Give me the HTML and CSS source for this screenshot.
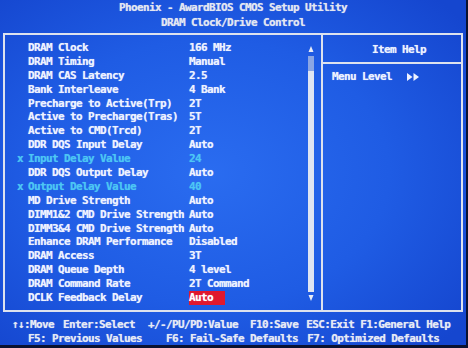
FILE: index.html
```html
<!DOCTYPE html>
<html lang="en">
<head>
    <meta charset="UTF-8">
    <title>DRAM Clock/Drive Control</title>
    <link rel="stylesheet" href="styles.css">
</head>
<body>
    <div class="screen">
        <header class="title">
            <div>Phoenix - AwardBIOS CMOS Setup Utility</div>
            <div>DRAM Clock/Drive Control</div>
        </header>

        <div class="frame">
            <section class="menu">
                <ul class="items">
                    <li class="item"><span class="mark"></span><span class="label">DRAM Clock</span><span class="value">166 MHz</span></li>
                    <li class="item"><span class="mark"></span><span class="label">DRAM Timing</span><span class="value">Manual</span></li>
                    <li class="item"><span class="mark"></span><span class="label">DRAM CAS Latency</span><span class="value">2.5</span></li>
                    <li class="item"><span class="mark"></span><span class="label">Bank Interleave</span><span class="value">4 Bank</span></li>
                    <li class="item"><span class="mark"></span><span class="label">Precharge to Active(Trp)</span><span class="value">2T</span></li>
                    <li class="item"><span class="mark"></span><span class="label">Active to Precharge(Tras)</span><span class="value">5T</span></li>
                    <li class="item"><span class="mark"></span><span class="label">Active to CMD(Trcd)</span><span class="value">2T</span></li>
                    <li class="item"><span class="mark"></span><span class="label">DDR DQS Input Delay</span><span class="value">Auto</span></li>
                    <li class="item locked"><span class="mark">x</span><span class="label">Input Delay Value</span><span class="value">24</span></li>
                    <li class="item"><span class="mark"></span><span class="label">DDR DQS Output Delay</span><span class="value">Auto</span></li>
                    <li class="item locked"><span class="mark">x</span><span class="label">Output Delay Value</span><span class="value">40</span></li>
                    <li class="item"><span class="mark"></span><span class="label">MD Drive Strength</span><span class="value">Auto</span></li>
                    <li class="item"><span class="mark"></span><span class="label">DIMM1&amp;2 CMD Drive Strength</span><span class="value">Auto</span></li>
                    <li class="item"><span class="mark"></span><span class="label">DIMM3&amp;4 CMD Drive Strength</span><span class="value">Auto</span></li>
                    <li class="item"><span class="mark"></span><span class="label">Enhance DRAM Performance</span><span class="value">Disabled</span></li>
                    <li class="item"><span class="mark"></span><span class="label">DRAM Access</span><span class="value">3T</span></li>
                    <li class="item"><span class="mark"></span><span class="label">DRAM Queue Depth</span><span class="value">4 level</span></li>
                    <li class="item"><span class="mark"></span><span class="label">DRAM Command Rate</span><span class="value">2T Command</span></li>
                    <li class="item"><span class="mark"></span><span class="label">DCLK Feedback Delay</span><span class="value selected">Auto</span></li>
                </ul>

                <div class="scrollbar">
                    <svg class="arrow" width="6" height="6" viewBox="0 0 6 6"><polygon points="3,0 5.5,6 0.5,6" fill="#e8ecf6"/></svg>
                    <div class="track"></div>
                    <svg class="arrow" width="6" height="6" viewBox="0 0 6 6"><polygon points="0.5,0 5.5,0 3,6" fill="#e8ecf6"/></svg>
                </div>
            </section>

            <aside class="help">
                <div class="help-title">Item Help</div>
                <div class="help-body">
                    <span>Menu Level</span>
                    <svg class="level" width="12" height="8" viewBox="0 0 12 8">
                        <polygon points="0,0 5.5,4 0,8" fill="#eef2ff"/>
                        <polygon points="6.5,0 12,4 6.5,8" fill="#eef2ff"/>
                    </svg>
                </div>
            </aside>
        </div>

        <footer class="keys">
            <div class="keys-row first">
                <span>↑↓:Move</span>
                <span>Enter:Select</span>
                <span>+/-/PU/PD:Value</span>
                <span>F10:Save</span>
                <span>ESC:Exit</span>
                <span>F1:General Help</span>
            </div>
            <div class="keys-row second">
                <span>F5: Previous Values</span>
                <span>F6: Fail-Safe Defaults</span>
                <span>F7: Optimized Defaults</span>
            </div>
        </footer>
    </div>
</body>
</html>
```

FILE: styles.css
```css
html, body {
    margin: 0;
    padding: 0;
    background: #0b1230;
}

body {
    width: 468px;
    height: 348px;
    overflow: hidden;
    font-family: "DejaVu Sans Mono", "Liberation Mono", monospace;
    font-weight: bold;
    font-size: 11px;
    letter-spacing: -0.62px;
    color: #eef2ff;
    text-shadow: 0 0 0.8px rgba(238, 242, 255, 0.7);
}

.screen {
    width: 466px;
    height: 345px;
    background: radial-gradient(ellipse 70% 70% at 45% 50%, #2a6cf0 0%, #1f5ce4 55%, #1546cf 100%);
}

.title {
    text-align: center;
    line-height: 15px;
    color: #e2e6f0;
}

.frame {
    box-sizing: border-box;
    height: 279px;
    margin: 3px 3px 0 3px;
    border: 2px solid #dde2ee;
    display: flex;
}

/* left: the settings list */
.menu {
    box-sizing: border-box;
    width: 318px;
    border-right: 2px solid #dde2ee;
    padding: 6px 7px 0 0;
    display: flex;
}

.items {
    list-style: none;
    margin: 0;
    padding: 0;
    flex: 1;
}

.item {
    display: flex;
    height: 13.9px;
    line-height: 13.9px;
    padding-left: 12px;
    white-space: pre;
}

.mark {
    width: 11px;
}

.label {
    width: 161px;
}

.locked {
    color: #4cc6f4;
    text-shadow: 0 0 0.8px rgba(76, 198, 244, 0.7);
}

.selected {
    display: inline-block;
    width: 36px;
    background: #e0182e;
    color: #ffffff;
}

.scrollbar {
    width: 6px;
    margin: 5px 0 9px 0;
    display: flex;
    flex-direction: column;
    align-items: center;
}

.arrow {
    display: block;
}

.track {
    flex: 1;
    width: 6px;
    margin: 4px 0 3px 0;
    background: linear-gradient(#8aa6e4 0, #8aa6e4 15px, #dfe5f2 15px);
}

/* right: item help */
.help {
    flex: 1;
}

.help-title {
    box-sizing: border-box;
    height: 29px;
    padding: 3px 0 0 14px;
    line-height: 24px;
    text-align: center;
    border-bottom: 2px solid #dde2ee;
}

.help-body {
    padding: 6px 0 0 9px;
    line-height: 14px;
    display: flex;
    align-items: center;
}

.level {
    margin-left: 15px;
}

/* key legend */
.keys {
    padding-top: 6px;
    color: #e6eaf4;
}

.keys-row {
    display: flex;
    line-height: 14px;
    white-space: pre;
}

.keys-row.first {
    padding-left: 12px;
}

.keys-row.first span:nth-child(2) { margin-left: 9px; }
.keys-row.first span:nth-child(3) { margin-left: 13px; }
.keys-row.first span:nth-child(4) { margin-left: 12px; }
.keys-row.first span:nth-child(5) { margin-left: 8px; }
.keys-row.first span:nth-child(6) { margin-left: 6px; }

.keys-row.second {
    padding-left: 28px;
}

.keys-row.second span:nth-child(2) { margin-left: 24px; }
.keys-row.second span:nth-child(3) { margin-left: 9px; }
```
